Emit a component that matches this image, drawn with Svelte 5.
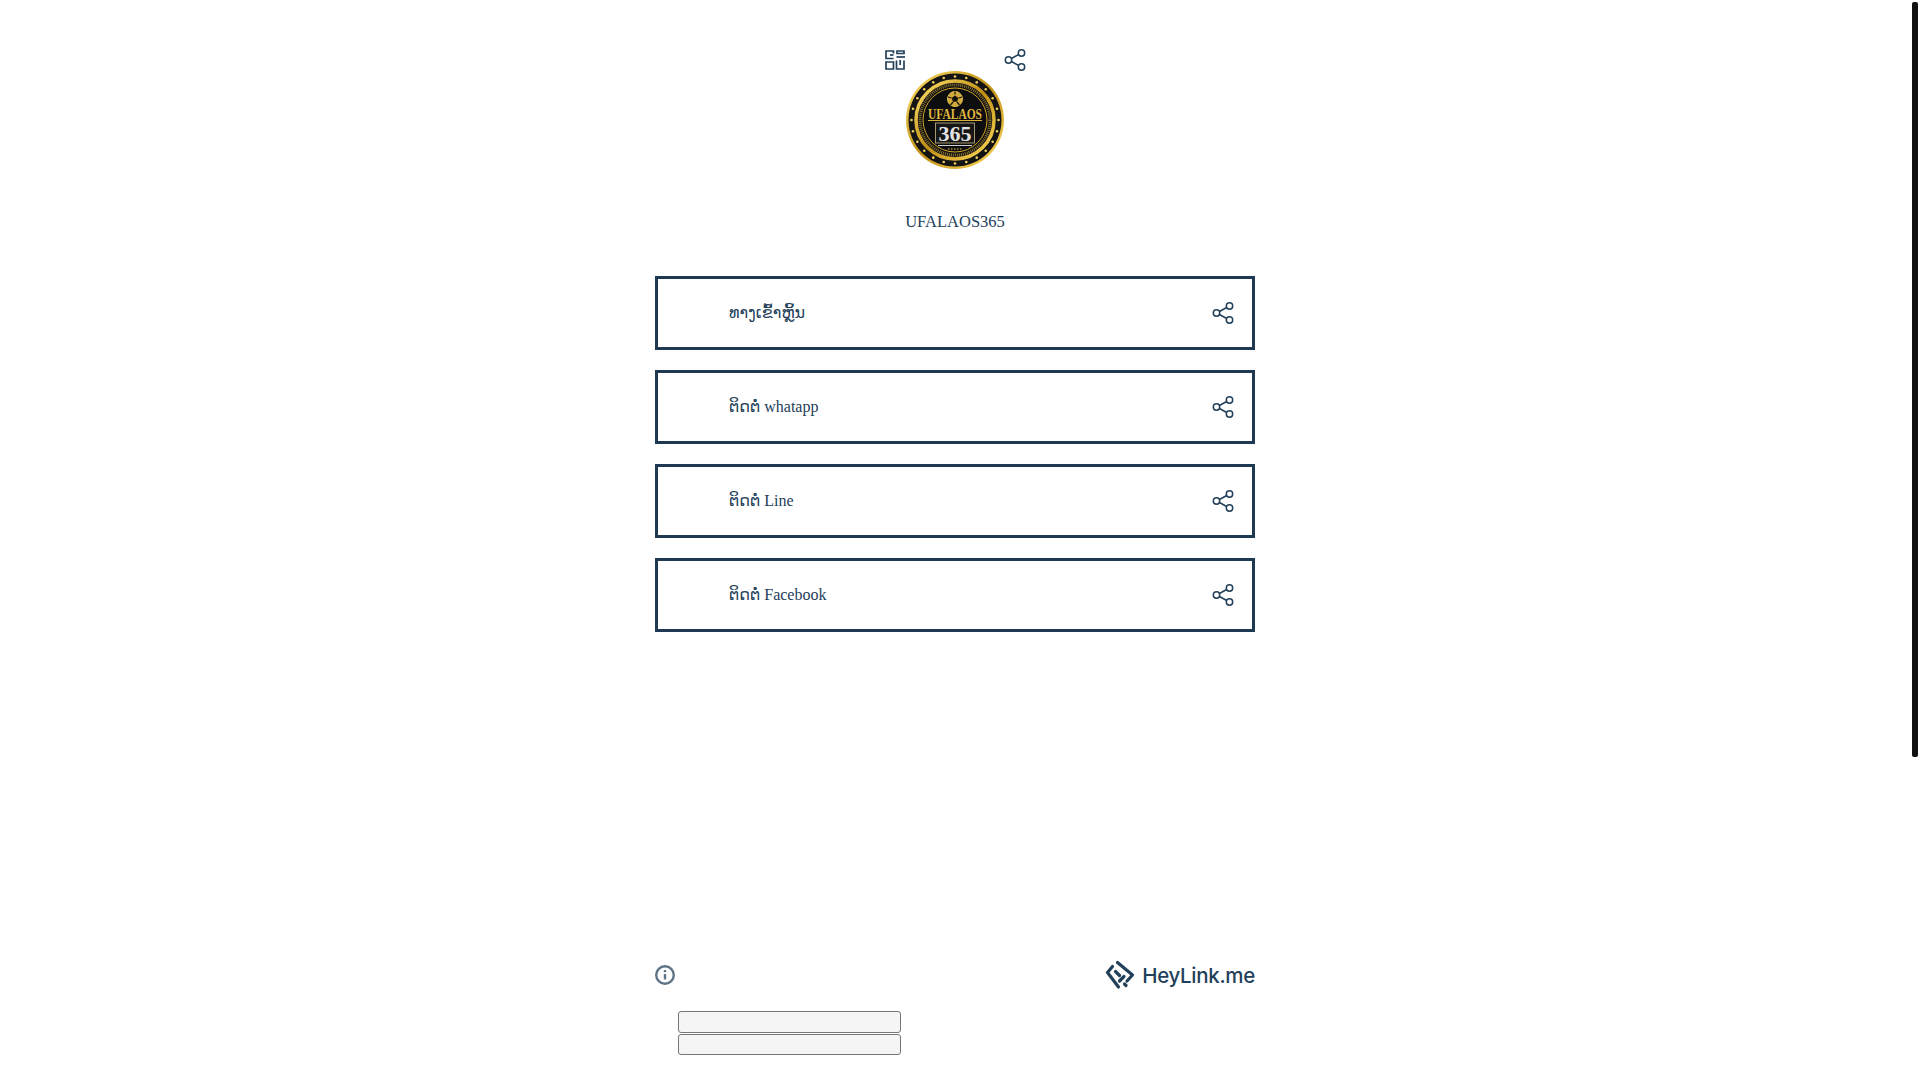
<script lang="ts">
    const links = [
        { id: 1, label: 'ທາງເຂົ້າຫຼິ້ນ' },
        { id: 2, label: 'ຕິດຕໍ່ whatapp' },
        { id: 3, label: 'ຕິດຕໍ່ Line' },
        { id: 4, label: 'ຕິດຕໍ່ Facebook' }
    ];

    // studs round the coin rim
    const studs = Array.from({ length: 24 }, (_, i) => {
        const a = (i / 24) * Math.PI * 2 + Math.PI / 2;
        return { x: 49 + Math.cos(a) * 43.5, y: 49 + Math.sin(a) * 43.5 };
    });
</script>

{#snippet share()}
    <svg class="icon" width="22" height="22" viewBox="1 1 22 22" fill="none" stroke="#23405a" stroke-width="1.5">
        <circle cx="5.5" cy="12" r="3.2" />
        <circle cx="18.5" cy="5" r="3.2" />
        <circle cx="18.5" cy="19" r="3.2" />
        <path d="M8.4 10.5l7.3-4M8.4 13.5l7.3 4" />
    </svg>
{/snippet}

<div class="thumb"></div>

<main class="page">
    <header class="profile">
        <div class="top">
            <button class="plain" aria-label="QR code">
                <svg class="icon" width="22" height="22" viewBox="-1 -1 22 22" fill="none" stroke="#23405a" stroke-width="1.7">
                    <path d="M8.500 3.500V1H1v7.500h7.500" />
                    <path d="M5 5h3.500" />
                    <path d="M12 1h7v2.500h-7z" />
                    <path d="M11.500 7H20" />
                    <path d="M1 12h7.500v7H1z" />
                    <path d="M11.500 10.500V19H19v-8.500" />
                    <path d="M15.200 10v5" />
                </svg>
            </button>
            <svg class="coin" width="98" height="98" viewBox="0 0 98 98">
                <defs>
                    <linearGradient id="gold" x1="0" y1="0" x2="1" y2="1">
                        <stop offset="0" stop-color="#ffe26a" />
                        <stop offset="0.5" stop-color="#c08e14" />
                        <stop offset="1" stop-color="#ffdc5c" />
                    </linearGradient>
                </defs>
                <circle cx="49" cy="49" r="49" fill="url(#gold)" />
                <circle cx="49" cy="49" r="46.500" fill="#141414" />
                <circle cx="49" cy="49" r="39" fill="none" stroke="url(#gold)" stroke-width="3.500" />
                <circle cx="49" cy="49" r="35" fill="#0d0d0d" stroke="#8a7430" stroke-width="3" stroke-dasharray="1 1" />
                <circle cx="49" cy="49" r="32" fill="#0d0d0d" stroke="#d3a62a" stroke-width="1" />
                {#each studs as s}
                    <circle cx={s.x} cy={s.y} r="1.300" fill="#f0cd58" />
                {/each}
                <circle cx="49" cy="28" r="7.500" fill="#cfa93a" stroke="#e3bf4c" stroke-width="1" />
                <path d="M49 24.500l3.300 2.400-1.300 3.900h-4l-1.300-3.900z" fill="#15120a" />
                <path d="M49 20.500v3M42 26l3.500 1M56 26l-3.500 1M44.500 34l2.500-3M53.500 34l-2.500-3" stroke="#15120a" stroke-width="1.200" />
                <text x="49" y="48" class="coin-name" textLength="54" lengthAdjust="spacingAndGlyphs">UFALAOS</text>
                <path d="M22 49.500h54" stroke="#d8b23c" stroke-width="1" />
                <rect x="29.500" y="52" width="39" height="20" fill="#161616" stroke="#c9b98a" stroke-width="0.800" />
                <text x="49" y="69.500" class="coin-num">365</text>
                <path d="M32 74.500h34" stroke="#cfcfcf" stroke-width="1" />
                <path d="M42 78h14" stroke="#f0cd58" stroke-width="1.200" stroke-dasharray="1.500 1.500" />
            </svg>
            <button class="plain" aria-label="Share">
                {@render share()}
            </button>
        </div>
        <h1>UFALAOS365</h1>
    </header>

    <nav class="links">
        {#each links as link (link.id)}
            <div class="card">
                <span>{link.label}</span>
                {@render share()}
            </div>
        {/each}
    </nav>

    <footer class="foot">
        <svg class="icon" width="20" height="20" viewBox="0 0 20 20" fill="none" stroke="#5f7486" stroke-width="2.400">
            <circle cx="10" cy="10" r="8.800" />
            <path d="M10 9v5.500" />
            <path d="M10 5v2.200" />
        </svg>
        <div class="brand">
            <svg class="icon" width="30" height="30" viewBox="0 0 30 30" fill="none" stroke="#23405a" stroke-width="3.200" stroke-linecap="round" stroke-linejoin="round">
                <path d="M7.500 6.500L2.500 12.500 13.500 27" />
                <path d="M12.500 2.500L27.500 15 22 21" />
                <path d="M10.500 11.500l4 4" />
                <path d="M14.500 21l4.500-4.500" />
                <path d="M21 25.500l-1.500-1.500" />
            </svg>
            <span>HeyLink.me</span>
        </div>
    </footer>

    <div class="blank">
        <button aria-label="blank"></button>
        <button aria-label="blank"></button>
    </div>
</main>

<style>
    :global(body) {
        margin: 0;
        background: #fff;
    }
    .page {
        box-sizing: border-box;
        width: 600px;
        height: 1080px;
        margin-left: 655px;
        padding-top: 49px;
        font-family: "Liberation Serif", "DejaVu Sans", serif;
        font-size: 16px;
        color: #23405a;
    }
    .thumb {
        position: fixed;
        top: 2px;
        right: 2px;
        width: 6px;
        height: 755px;
        background: #111;
        border-radius: 2px;
    }
    .icon {
        display: block;
    }
    .plain {
        padding: 0;
        border: 0;
        background: none;
        height: 22px;
    }
    .profile {
        display: flex;
        flex-direction: column;
        align-items: center;
    }
    .top {
        display: flex;
        justify-content: center;
        align-items: flex-start;
        width: 144px;
    }
    .coin {
        display: block;
        margin-top: 22px;
    }
    .coin-name {
        font: 700 15px "Liberation Serif", serif;
        fill: #e6bf45;
        stroke: #6b5210;
        stroke-width: 0.2px;
        text-anchor: middle;
    }
    .coin-num {
        font: 700 22px "Liberation Serif", serif;
        fill: #e4e4e4;
        text-anchor: middle;
    }
    h1 {
        margin: 44px 0 0;
        font-size: 16.5px;
        font-weight: 400;
        line-height: 18px;
    }
    .links {
        display: flex;
        flex-direction: column;
        gap: 20px;
        margin-top: 45px;
    }
    .card {
        box-sizing: border-box;
        display: flex;
        align-items: center;
        justify-content: space-between;
        height: 74px;
        padding: 0 18px 2px 71px;
        border: 3px solid #1e3a52;
    }
    .card .icon {
        margin-bottom: -2px;
    }
    .foot {
        display: flex;
        align-items: center;
        justify-content: space-between;
        margin-top: 328px;
    }
    .brand {
        display: flex;
        align-items: center;
        gap: 7px;
        font: 500 20.5px Inter, sans-serif;
        letter-spacing: -0.3px;
    }
    .blank {
        display: flex;
        flex-direction: column;
        gap: 1px;
        margin: 21px 0 0 23px;
        width: 223px;
    }
    .blank button {
        box-sizing: border-box;
        height: 21.5px;
        padding: 0;
        border: 1px solid #767676;
        border-radius: 3px;
        background: #f5f5f5;
    }
</style>
